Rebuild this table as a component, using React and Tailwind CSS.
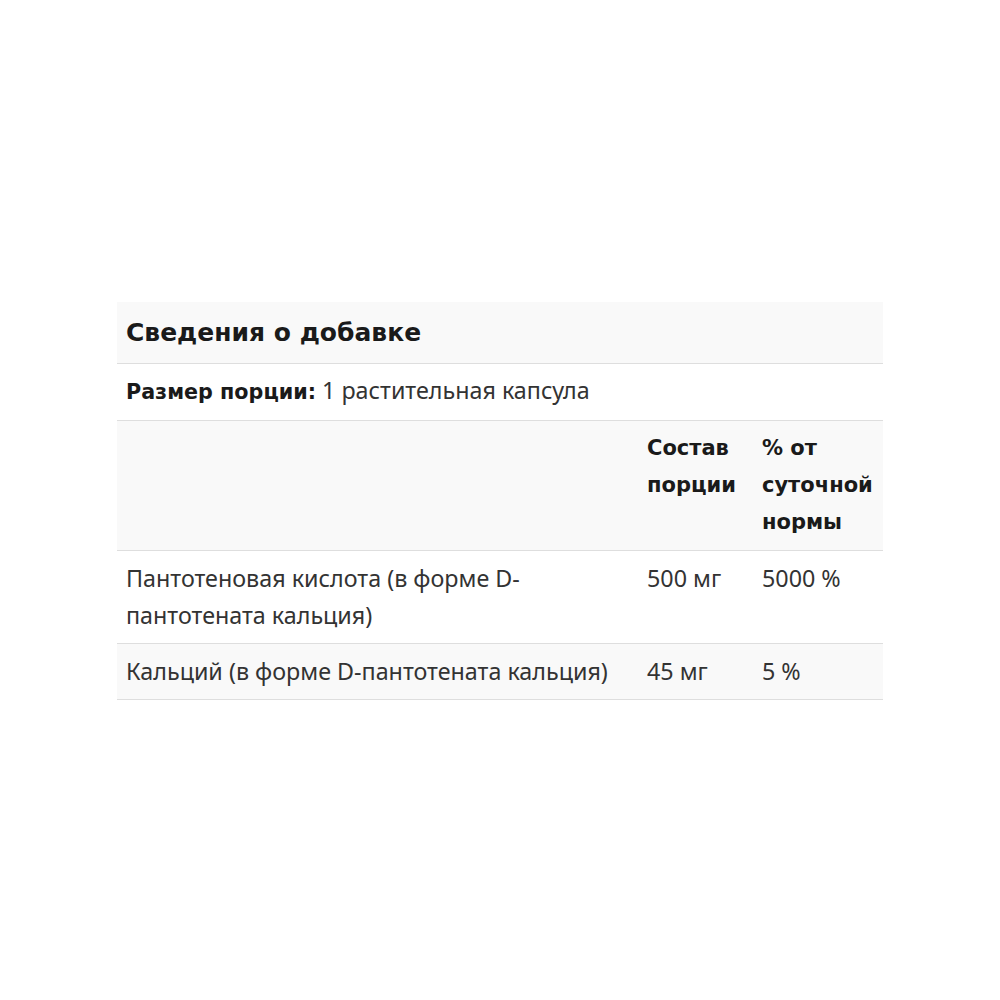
export default function App() {
  const bold = { fontFamily: '"DejaVu Sans", Verdana, sans-serif' };
  return (
    <div className="w-[1000px] h-[1000px] bg-white flex items-start justify-center pt-[302px]">
      <table
        className="table-fixed border-collapse w-[766px] text-[23.3px] leading-[37px] text-[#333]"
        style={{ fontFamily: '"Noto Sans", "Open Sans", sans-serif' }}
      >
        <colgroup>
          <col className="w-[521px]" />
          <col className="w-[115px]" />
          <col className="w-[130px]" />
        </colgroup>
        <tbody>
          <tr className="bg-[#f9f9f9] border-b border-[#dedede]">
            <td colSpan={3} className="h-[61px] px-[9px] align-middle">
              <span className="text-[25px] font-bold text-[#1a1a1a]" style={bold}>
                Сведения о добавке
              </span>
            </td>
          </tr>
          <tr className="bg-white border-b border-[#dedede]">
            <td colSpan={3} className="h-[57px] px-[9px] align-middle">
              <span className="font-bold text-[#1a1a1a] text-[20.7px]" style={bold}>Размер порции:</span>{" "}
              1 растительная капсула
            </td>
          </tr>
          <tr className="bg-[#f9f9f9] border-b border-[#dedede]">
            <td className="px-[9px] py-[9px]"></td>
            <td className="px-[9px] py-[9px] align-top font-bold text-[#1a1a1a] text-[21px]" style={bold}>
              Состав порции
            </td>
            <td className="px-[9px] py-[9px] align-top font-bold text-[#1a1a1a] text-[21px]" style={bold}>
              % от суточной нормы
            </td>
          </tr>
          <tr className="bg-white border-b border-[#dedede]">
            <td className="px-[9px] py-[9px] align-top">
              Пантотеновая кислота (в форме D-пантотената кальция)
            </td>
            <td className="px-[9px] py-[9px] align-top">500 мг</td>
            <td className="px-[9px] py-[9px] align-top">5000 %</td>
          </tr>
          <tr className="bg-[#f9f9f9] border-b border-[#dedede]">
            <td className="px-[9px] py-[9px] align-top">
              Кальций (в форме D-пантотената кальция)
            </td>
            <td className="px-[9px] py-[9px] align-top">45 мг</td>
            <td className="px-[9px] py-[9px] align-top">5 %</td>
          </tr>
        </tbody>
      </table>
    </div>
  );
}
